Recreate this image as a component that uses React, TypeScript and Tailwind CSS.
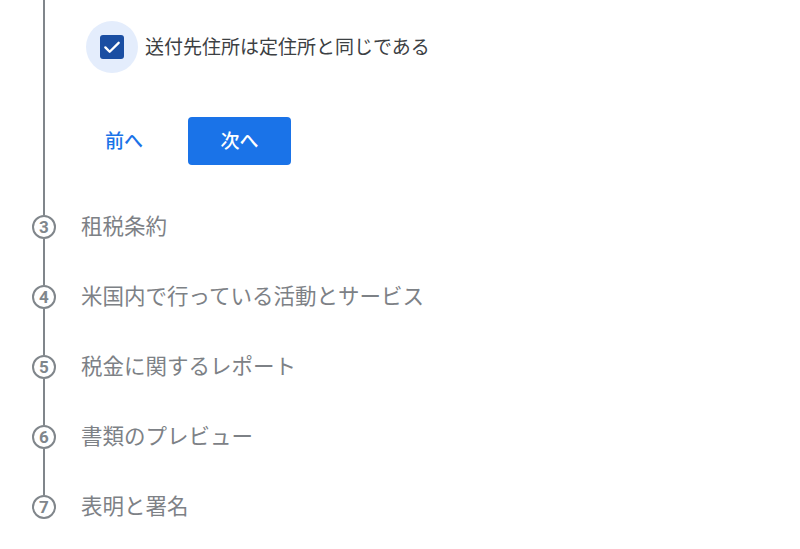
import React from "react";

const steps = [
  { n: 3, label: "租税条約" },
  { n: 4, label: "米国内で行っている活動とサービス" },
  { n: 5, label: "税金に関するレポート" },
  { n: 6, label: "書類のプレビュー" },
  { n: 7, label: "表明と署名" },
];

const font = "font-['Roboto','Noto_Sans_CJK_JP',sans-serif]";

export default function App() {
  return (
    <div className={`w-[800px] h-[549px] bg-white overflow-hidden ${font}`}>
      {/* top section: current step content */}
      <div className="flex h-[192px]">
        <div className="w-[86px] shrink-0 flex">
          <div className="ml-[43px] w-[2px] h-full bg-[#80868b]" />
        </div>
        <div className="flex flex-col pt-[21px]">
          <label className="flex items-center">
            <span className="w-[52px] h-[52px] rounded-full bg-[#e4edfc] flex items-center justify-center">
              <span className="w-[24px] h-[24px] rounded-[3px] bg-[#1a4ea2] flex items-center justify-center">
                <svg width="20" height="20" viewBox="0 0 24 24" fill="none">
                  <path d="M4 12.5l5.2 5.2L20 7" stroke="#ffffff" strokeWidth="2.8" strokeLinecap="round" strokeLinejoin="round" />
                </svg>
              </span>
            </span>
            <span className="ml-[7px] pt-[1px] text-[19px] leading-[24px] text-[#3c4043]">
              送付先住所は定住所と同じである
            </span>
          </label>
          <div className="flex items-center mt-[44px]">
            <button className="w-[76px] h-[48px] pt-[3px] flex items-center justify-center text-[19px] font-medium text-[#1a73e8]">
              前へ
            </button>
            <button className="ml-[26px] w-[103px] h-[48px] pt-[2px] rounded-[4px] bg-[#1a73e8] flex items-center justify-center text-[19px] font-medium text-white">
              次へ
            </button>
          </div>
        </div>
      </div>
      {/* remaining steps */}
      {steps.map((s, i) => (
        <div key={s.n} className="flex h-[70px]">
          <div className="w-[81px] shrink-0 flex flex-col">
            <div className="ml-[43px] w-[2px] flex-1 bg-[#80868b]" />
            <div className="ml-[32px] w-[24px] h-[24px] rounded-full border-[2.5px] border-[#80868b] flex items-center justify-center text-[17px] leading-none font-bold text-[#80868b]">
              {s.n}
            </div>
            <div className={`ml-[43px] w-[2px] flex-1 ${i < steps.length - 1 ? "bg-[#80868b]" : ""}`} />
          </div>
          <div className="flex items-center text-[21.5px] font-normal text-[#7d8186]">
            {s.label}
          </div>
        </div>
      ))}
    </div>
  );
}
